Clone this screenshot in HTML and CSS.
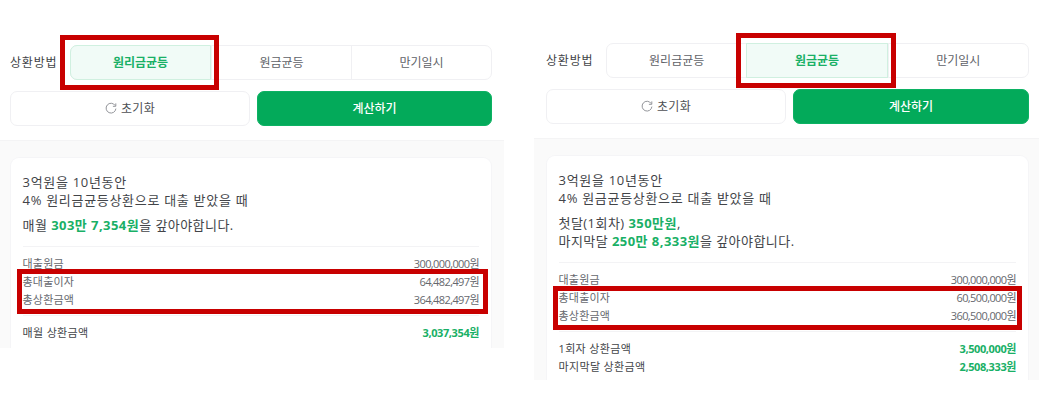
FILE: index.html
```
<!DOCTYPE html>
<html lang="ko">
<head>
    <meta charset="UTF-8">
    <meta name="viewport" content="width=device-width, initial-scale=1.0">
    <title>대출 계산기</title>
    <link rel="stylesheet" href="styles.css">
</head>
<body>
    <div class="compare">
        <!-- 원리금균등 -->
        <section class="calc">
            <div class="calc-form">
                <div class="method">
                    <span class="method-label">상환방법</span>
                    <div class="tabs">
                        <button class="tab active">원리금균등</button>
                        <button class="tab">원금균등</button>
                        <button class="tab">만기일시</button>
                    </div>
                    <div class="mark mark-tab"></div>
                </div>
                <div class="actions">
                    <button class="btn reset">
                        <svg class="icon" viewBox="0 0 12 12"><path d="M10.2 3.6A4.9 4.9 0 1 0 10.9 6.6M10.8 1.4v2.9H7.9"/></svg>
                        초기화
                    </button>
                    <button class="btn submit">계산하기</button>
                </div>
            </div>
            <div class="result">
                <div class="card">
                    <div class="summary">
                        <p>3억원을 10년동안<br>4% 원리금균등상환으로 대출 받았을 때</p>
                        <p>매월 <strong>303만 7,354원</strong>을 갚아야합니다.</p>
                    </div>
                    <dl class="detail">
                        <div class="row"><dt>대출원금</dt><dd>300,000,000원</dd></div>
                        <div class="row"><dt>총대출이자</dt><dd>64,482,497원</dd></div>
                        <div class="row"><dt>총상환금액</dt><dd>364,482,497원</dd></div>
                        <div class="mark mark-detail"></div>
                    </dl>
                    <dl class="detail total">
                        <div class="row"><dt>매월 상환금액</dt><dd>3,037,354원</dd></div>
                    </dl>
                </div>
            </div>
        </section>

        <!-- 원금균등 -->
        <section class="calc second">
            <div class="calc-form">
                <div class="method">
                    <span class="method-label">상환방법</span>
                    <div class="tabs">
                        <button class="tab">원리금균등</button>
                        <button class="tab active">원금균등</button>
                        <button class="tab">만기일시</button>
                    </div>
                    <div class="mark mark-tab"></div>
                </div>
                <div class="actions">
                    <button class="btn reset">
                        <svg class="icon" viewBox="0 0 12 12"><path d="M10.2 3.6A4.9 4.9 0 1 0 10.9 6.6M10.8 1.4v2.9H7.9"/></svg>
                        초기화
                    </button>
                    <button class="btn submit">계산하기</button>
                </div>
            </div>
            <div class="result">
                <div class="card">
                    <div class="summary">
                        <p>3억원을 10년동안<br>4% 원금균등상환으로 대출 받았을 때</p>
                        <p>첫달(1회차) <strong>350만원</strong>,<br>마지막달 <strong>250만 8,333원</strong>을 갚아야합니다.</p>
                    </div>
                    <dl class="detail">
                        <div class="row"><dt>대출원금</dt><dd>300,000,000원</dd></div>
                        <div class="row"><dt>총대출이자</dt><dd>60,500,000원</dd></div>
                        <div class="row"><dt>총상환금액</dt><dd>360,500,000원</dd></div>
                        <div class="mark mark-detail"></div>
                    </dl>
                    <dl class="detail total">
                        <div class="row"><dt>1회자 상환금액</dt><dd>3,500,000원</dd></div>
                        <div class="row"><dt>마지막달 상환금액</dt><dd>2,508,333원</dd></div>
                    </dl>
                </div>
            </div>
        </section>
    </div>
</body>
</html>
```
FILE: styles.css
```
* {
    margin: 0;
    padding: 0;
    box-sizing: border-box;
}

body {
    background: #fff;
    color: #424448;
    font-family: "Open Sans", "Noto Sans CJK KR", sans-serif;
    overflow: hidden;
}

button {
    font-family: inherit;
}

.compare {
    display: flex;
    align-items: flex-start;
    gap: 30px;
}

.calc {
    display: flex;
    flex-direction: column;
    width: 504px;
    height: 348px;
    padding-top: 45px;
}

.calc.second {
    width: 505px;
    height: 380px;
    padding-top: 43px;
}

.calc-form {
    padding: 0 12px 14px 10px;
}

.second .calc-form {
    padding: 0 10px 14px 12px;
}

.method {
    position: relative;
    display: flex;
    align-items: center;
    margin-bottom: 11px;
}

.method-label {
    width: 60px;
    padding-bottom: 1px;
    font-size: 12px;
    letter-spacing: 0.8px;
    white-space: nowrap;
}

.tabs {
    display: flex;
    flex: 1;
    height: 35px;
    border: 1px solid #f0f0f3;
    border-radius: 7px;
}

.tab {
    flex: 1;
    padding-bottom: 1px;
    border: 0;
    border-left: 1px solid #f0f0f3;
    background: none;
    color: #606268;
    font-size: 12px;
}

.tab:first-child {
    border-left: 0;
}

.tab.active {
    margin: -1px 0;
    border: 1px solid #d0f0e0;
    background: #f1fbf7;
    color: #19b066;
    font-weight: 700;
}

.tab.active:first-child {
    margin-left: -1px;
    border-radius: 7px 0 0 7px;
}

.actions {
    display: flex;
    gap: 7px;
}

.btn {
    display: flex;
    justify-content: center;
    align-items: center;
    gap: 4px;
    height: 35px;
    padding-bottom: 1px;
    border-radius: 7px;
    font-size: 12px;
}

.reset {
    width: 240px;
    border: 1px solid #f0f0f3;
    background: #fff;
    color: #4e5055;
    letter-spacing: 0.3px;
}

.submit {
    flex: 1;
    border: 1px solid #0cb263;
    background: #03aa5a;
    color: #fff;
    font-weight: 500;
}

.icon {
    width: 12px;
    height: 12px;
    fill: none;
    stroke: #93959a;
}

.result {
    flex: 1;
    min-height: 0;
    padding: 16px 12px 0 10px;
    border-top: 1px solid #f4f4f5;
    background: #fafafa;
}

.second .result {
    padding: 16px 10px 0 12px;
}

.card {
    height: 100%;
    padding: 15px 12px 0 11.5px;
    border: 1px solid #f5f5f7;
    border-bottom: 0;
    border-radius: 9px 9px 0 0;
    background: #fff;
}

.summary {
    padding-bottom: 12px;
    font-size: 13px;
    line-height: 18px;
    letter-spacing: 0.7px;
}

.summary p + p {
    margin-top: 7px;
    letter-spacing: 0.45px;
}

.summary strong {
    color: #19b066;
    font-weight: 700;
}

.detail {
    position: relative;
    padding: 8px 0 6px;
    border-top: 1px solid #f3f3f5;
    color: #66686e;
    font-size: 11px;
}

.row {
    display: flex;
    justify-content: space-between;
    line-height: 18px;
}

.row dt {
    letter-spacing: 0.2px;
}

.row dd {
    letter-spacing: -0.6px;
}

.total {
    color: #424448;
}

.total dt {
    letter-spacing: 0.35px;
}

.total dd {
    color: #19b066;
    font-weight: 700;
    letter-spacing: -0.4px;
}

/* 강조 박스 */
.mark {
    position: absolute;
    border: 5px solid #c80000;
}

.mark-tab {
    top: -10px;
    left: 50px;
    width: 159px;
    height: 55px;
}

.second .mark-tab {
    left: 190px;
    width: 160px;
}

.mark-detail {
    top: 22px;
    left: -6px;
    right: -9px;
    height: 45px;
}

.second .mark-detail {
    top: 23px;
    right: -6px;
    height: 44px;
}
```
